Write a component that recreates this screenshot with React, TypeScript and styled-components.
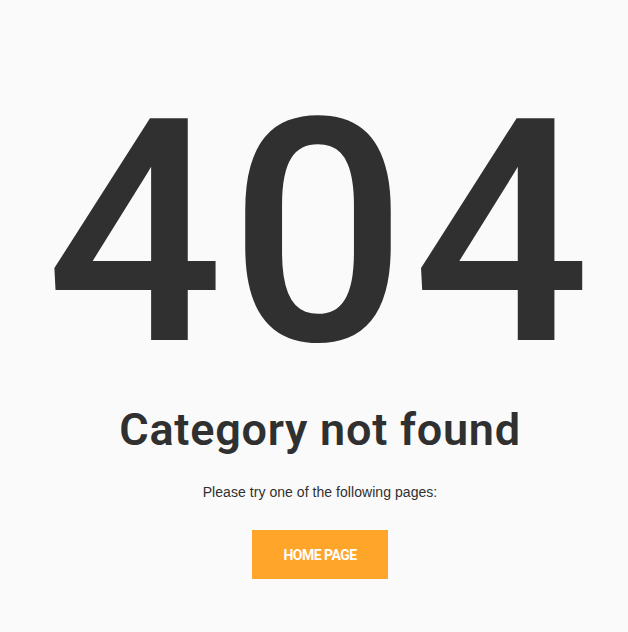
import styled, { createGlobalStyle } from "styled-components";

const GlobalStyle = createGlobalStyle`
  html, body {
    margin: 0;
    padding: 0;
    background: #fafafa;
    overflow: hidden;
  }
`;

export default function App() {
  return (
    <>
      <GlobalStyle />
      <Page>
        <Code>404</Code>
        <Title>Category not found</Title>
        <Hint>Please try one of the following pages:</Hint>
        <HomeButton href="#">HOME PAGE</HomeButton>
      </Page>
    </>
  );
}

const Page = styled.div`
  box-sizing: border-box;
  width: 628px;
  height: 632px;
  padding-left: 12px;
  display: flex;
  flex-direction: column;
  align-items: center;
  color: #303030;
  overflow: hidden;
`;

const Code = styled.h1`
  margin: 78px 0 0;
  font-family: Roboto, "Noto Sans", sans-serif;
  font-weight: 500;
  font-size: 312px;
  line-height: 312px;
  letter-spacing: 6px;
  text-indent: 2px;
`;

const Title = styled.h2`
  margin: 14px 0 0;
  font-family: Roboto, "Noto Sans", sans-serif;
  font-weight: 600;
  font-size: 45px;
  line-height: 52px;
  letter-spacing: 0.75px;
`;

const Hint = styled.p`
  margin: 26px 0 0;
  font-family: "Liberation Sans", Arial, sans-serif;
  font-size: 14px;
  line-height: 20px;
  letter-spacing: 0.05px;
`;

const HomeButton = styled.a`
  margin-top: 28px;
  width: 136px;
  height: 49px;
  display: flex;
  align-items: center;
  justify-content: center;
  background: #ffa52a;
  color: #fff;
  font-family: Roboto, "Noto Sans", sans-serif;
  font-weight: 700;
  font-size: 14px;
  letter-spacing: -0.5px;
  text-decoration: none;
`;
